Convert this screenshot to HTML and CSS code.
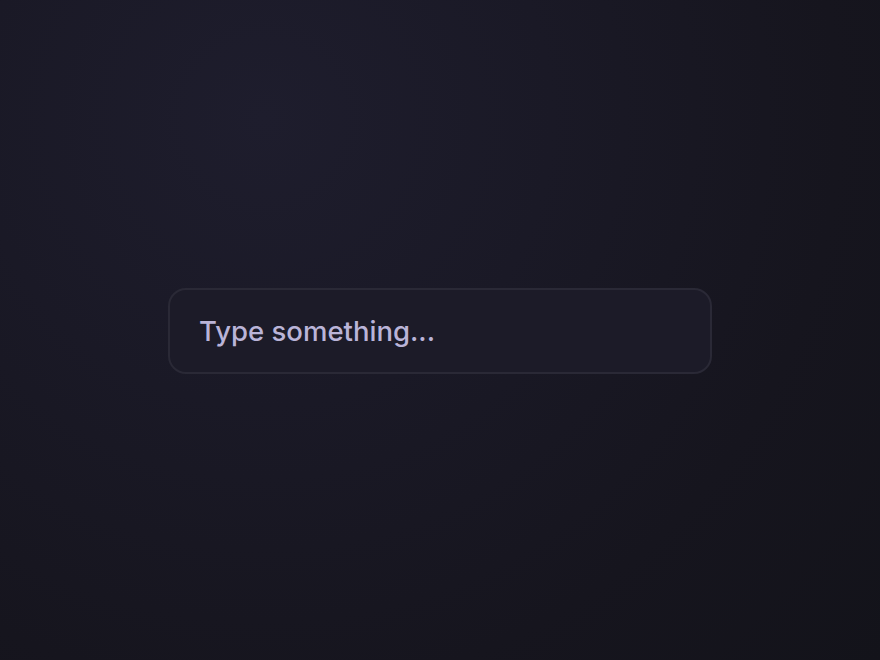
FILE: index.html
```html
<!DOCTYPE html>
<html>
<head>
<meta charset="utf-8">
<link rel="stylesheet" href="styles.css">
</head>
<body>
<main class="stage">
  <input class="field" type="text" placeholder="Type something...">
</main>
</body>
</html>
```
FILE: styles.css
```css
html, body {
  margin: 0;
  height: 100%;
}
body {
  background: radial-gradient(circle at 30% 18%, #1e1d2d 0%, #1a1926 35%, #16151e 70%, #13131a 100%);
  font-family: Inter, "Noto Sans", sans-serif;
}
.stage {
  height: 100%;
  padding-top: 2px;
  box-sizing: border-box;
  display: flex;
  align-items: center;
  justify-content: center;
}
.field {
  box-sizing: border-box;
  width: 544px;
  height: 86px;
  padding: 0 29px;
  border: 2px solid #2a2936;
  border-radius: 18px;
  background: #1c1b28;
  color: #bab4d8;
  font-family: Inter, "Noto Sans", sans-serif;
  font-size: 27.5px;
  font-weight: 500;
  outline: none;
}
.field::placeholder {
  color: #bab4d8;
  opacity: 1;
}
```
